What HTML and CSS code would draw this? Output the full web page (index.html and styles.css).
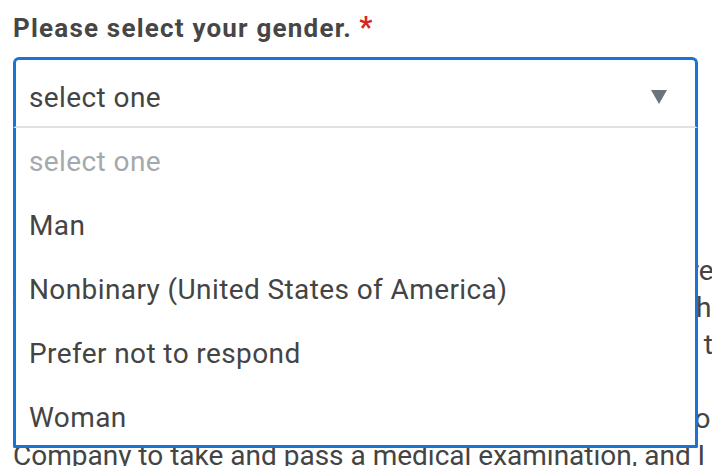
FILE: index.html
```html
<!DOCTYPE html>
<html lang="en">
<head>
    <meta charset="UTF-8">
    <title>Gender</title>
    <link rel="stylesheet" href="styles.css">
</head>
<body>
    <div class="field">
        <label class="field-label" for="gender">Please select your gender.<span class="required">*</span></label>

        <div class="select-wrap">
            <div class="select-trigger" id="gender">
                <span>select one</span>
                <svg class="caret" width="16" height="14" viewBox="0 0 16 14"><polygon points="0,0 16,0 8,14" fill="#6c747b"/></svg>
            </div>
            <ul class="select-list">
                <li class="placeholder">select one</li>
                <li>Man</li>
                <li>Nonbinary (United States of America)</li>
                <li>Prefer not to respond</li>
                <li>Woman</li>
            </ul>
        </div>
    </div>

    <p class="notice-text">
        <span>Applicants for this position who receive a job offer are required</span>
        <span>to provide documents and verifications before they are hired</span>
        <span>for employment, applicants will also be asked to attend the</span>
        <span>orientation session.</span>
        <span>All offers of employment are contingent as required by o</span>
        <span>Company to take and pass a medical examination, and I</span>
    </p>
</body>
</html>
```

FILE: styles.css
```css
html, body {
    margin: 0;
    padding: 0;
    overflow: hidden;
}

body {
    font-family: Roboto, "Liberation Sans", sans-serif;
    width: 712px;
    height: 466px;
    background-color: #ffffff;
    color: #444444;
}

.field {
    padding: 12px 14px 0 13px;
}

.field-label {
    display: block;
    font-size: 26px;
    font-weight: bold;
    letter-spacing: 1.2px;
    line-height: 30px;
    color: #464646;
    margin-bottom: 14px;
}

    .field-label .required {
        color: #d7261e;
        font-size: 29px;
        margin-left: 7px;
    }

.select-wrap {
    position: relative;
    width: 685px;
}

.select-trigger {
    display: flex;
    justify-content: space-between;
    align-items: flex-start;
    height: 66px;
    box-sizing: content-box;
    padding: 0 28px 0 13px;
    border: 3px solid #1b74d3;
    border-bottom: 2px solid #e1e1e1;
    border-radius: 6px 6px 0 0;
    font-size: 28px;
    letter-spacing: 0.4px;
    color: #444444;
}

    .select-trigger span {
        padding-top: 21px;
    }

    .select-trigger .caret {
        margin-top: 30px;
    }

.select-list {
    position: absolute;
    top: 100%;
    left: 0;
    right: 0;
    margin: 0;
    padding: 0;
    list-style: none;
    background-color: #ffffff;
    border: 3px solid #1b74d3;
    border-top: none;
    border-radius: 0 0 2px 2px;
    z-index: 10;
}

    .select-list li {
        height: 61px;
        line-height: 61px;
        padding: 3px 0 0 13px;
        font-size: 28px;
        letter-spacing: 0.4px;
        color: #444444;
    }

        .select-list li:last-child {
            height: 58px;
        }

    .select-list .placeholder {
        color: #a4a9ae;
    }

.notice-text {
    margin: 124px 0 0 13px;
    width: 760px;
    font-size: 28px;
    line-height: 37px;
    color: #444444;
}

    .notice-text span {
        display: block;
        white-space: nowrap;
    }
```
